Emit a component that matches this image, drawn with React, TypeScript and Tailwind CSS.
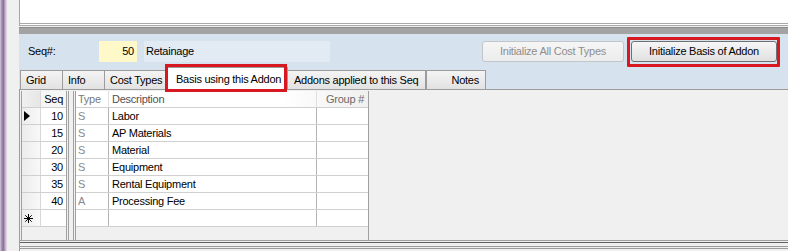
import React from "react";

const rows = [
  { seq: "10", type: "S", desc: "Labor" },
  { seq: "15", type: "S", desc: "AP Materials" },
  { seq: "20", type: "S", desc: "Material" },
  { seq: "30", type: "S", desc: "Equipment" },
  { seq: "35", type: "S", desc: "Rental Equipment" },
  { seq: "40", type: "A", desc: "Processing Fee" },
];

const tabs = [
  { label: "Grid", w: "w-[42px]", align: "justify-start pl-[5px]" },
  { label: "Info", w: "w-[42px]", align: "justify-start pl-[5px]" },
  { label: "Cost Types", w: "w-[63px]", align: "justify-start pl-[5px]" },
];

export default function App() {
  return (
    <div
      className="flex w-[788px] h-[251px] overflow-hidden bg-[#f0f0f0] text-[11px] tracking-[-0.25px] text-black"
      style={{ fontFamily: '"Liberation Sans", Arial, sans-serif' }}
    >
      {/* window edge */}
      <div className="w-[7px] h-full bg-[linear-gradient(to_right,#d6cade,#a48cb0,#8c7498,#c4b4cc,#e6deea)]" />

      <div className="flex flex-col flex-1 ml-[12px]">
        {/* upper white pane */}
        <div className="h-[26px] bg-white border-l border-[#a8a8a8] border-b-[3px] border-b-[#a8a8a8] border-double" />
        <div className="h-[1px]" />
        {/* splitter */}
        <div className="h-[7px] bg-[#a3a3a3] border-t border-[#8c8c8c]" />

        {/* header panel */}
        <div className="flex flex-col h-[55px] bg-[#d6e3ee]">
          <div className="flex items-center h-[33px] pt-[1px]">
            <div className="w-[80px] pl-[9px]">Seq#:</div>
            <div className="w-[38px] h-[21px] bg-[#fff8c8] flex items-center justify-end pr-[3px]">50</div>
            <div className="w-[186px] h-[21px] ml-[7px] bg-[#e2ebf3] flex items-center pl-[2px]">Retainage</div>
            <div className="flex-1" />
            <button className="w-[142px] h-[21px] rounded-[3px] border border-[#c2c6ca] bg-[linear-gradient(#f6f6f6,#ececec)] text-[#8e8e8e]">
              Initialize All Cost Types
            </button>
            <div className="relative ml-[7px] mr-[11px]">
              <button className="w-[146px] h-[21px] rounded-[3px] border border-[#707070] bg-[linear-gradient(#f6f6f6,#e0e0e0)]">
                Initialize Basis of Addon
              </button>
              <div className="absolute -left-[4px] -right-[3px] -top-[4px] -bottom-[5px] border-[3px] border-[#d81820] rounded-[1px]" />
            </div>
          </div>
          {/* tab strip */}
          <div className="flex items-end h-[22px] pl-[1px]">
            {tabs.map((t) => (
              <div
                key={t.label}
                className={`${t.w} ${t.align} flex items-center h-[19px] border border-b-0 border-r-0 border-[#9c9c9c] bg-[linear-gradient(#f4f4f4,#e2e2e2)]`}
              >
                {t.label}
              </div>
            ))}
            <div className="relative w-[121px] h-[23px] flex items-center pl-[8px] bg-white border border-b-0 border-[#9c9c9c] -mb-[1px]">
              Basis using this Addon
              <div className="absolute -left-[3px] right-0 -top-[4px] -bottom-[2px] border-[3px] border-[#d81820]" />
            </div>
            <div className="w-[138px] h-[19px] flex items-center pl-[6px] border border-b-0 border-l-0 border-[#9c9c9c] bg-[linear-gradient(#f4f4f4,#e2e2e2)]">
              Addons applied to this Seq
            </div>
            <div className="w-[60px] h-[19px] flex items-center justify-end pr-[6px] border border-b-0 border-[#9c9c9c] bg-[linear-gradient(#f4f4f4,#e2e2e2)]">
              Notes
            </div>
          </div>
        </div>

        {/* tab page */}
        <div className="flex flex-col flex-1 border-t border-l border-[#9c9c9c] bg-[#f0f0f0]">
          <div className="flex h-[151px] pl-[1px] pt-[1px] border-b border-[#a0a0a0]">
            {/* frozen pane */}
            <div className="flex flex-col w-[48px] border-l border-r-[3px] border-double border-[#a0a0a0]">
              <div className="flex h-[17px] border-b border-[#d0d0d0]">
                <div className="w-[18px] bg-[linear-gradient(to_right,#f0f0f0,#e6e6e6)]" />
                <div className="flex-1 flex items-center justify-end pr-[3px] bg-[#f6f6f6] border-l border-[#d8d8d8]">Seq</div>
              </div>
              {rows.map((r, i) => (
                <div key={r.seq} className="flex h-[17px] border-b border-[#d0d0d0] bg-white">
                  <div className="w-[18px] flex items-center pl-[2px] bg-[linear-gradient(to_right,#ececec,#f8f8f8)]">
                    {i === 0 && (
                      <svg width="6" height="10" viewBox="0 0 6 10">
                        <path d="M0 0 L6 5 L0 10 Z" fill="#000" />
                      </svg>
                    )}
                  </div>
                  <div className="flex-1 flex items-center justify-end pr-[3px] border-l border-[#d8d8d8]">{r.seq}</div>
                </div>
              ))}
              <div className="flex h-[17px] border-b border-[#d0d0d0] bg-white">
                <div className="w-[18px] flex items-center pl-[2px] bg-[linear-gradient(to_right,#ececec,#f8f8f8)]">
                  <svg width="9" height="9" viewBox="0 0 9 9" stroke="#000" strokeWidth="1">
                    <path d="M4.5 0 V9 M0 4.5 H9 M1.3 1.3 L7.7 7.7 M7.7 1.3 L1.3 7.7" />
                  </svg>
                </div>
                <div className="flex-1 border-l border-[#d8d8d8]" />
              </div>
            </div>
            <div className="w-[4px]" />
            {/* scrolling pane */}
            <div className="flex flex-col w-[296px] border-l-[3px] border-r border-double border-[#a0a0a0]">
              <div className="flex h-[17px] border-b border-[#d0d0d0] bg-[linear-gradient(to_right,#ffffff,#ffffff_70%,#f0f0f0)]">
                <div className="w-[33px] flex items-center pl-[2px] text-[#7a7a7a] border-r border-[#e0e0e0]">Type</div>
                <div className="w-[208px] flex items-center pl-[3px] text-[#505050] border-r border-[#e0e0e0]">Description</div>
                <div className="flex-1 flex items-center justify-end pr-[4px] text-[#6a6a6a]">Group #</div>
              </div>
              {rows.map((r) => (
                <div key={r.seq} className="flex h-[17px] border-b border-[#d0d0d0] bg-white">
                  <div className="w-[33px] flex items-center pl-[2px] text-[#8a8a8a] border-r border-[#b4b4b4]">{r.type}</div>
                  <div className="w-[208px] flex items-center pl-[3px] border-r border-[#b4b4b4]">{r.desc}</div>
                  <div className="flex-1" />
                </div>
              ))}
              <div className="flex h-[17px] border-b border-[#d0d0d0] bg-white">
                <div className="w-[33px] border-r border-[#b4b4b4]" />
                <div className="w-[208px] border-r border-[#b4b4b4]" />
                <div className="flex-1" />
              </div>
            </div>
          </div>
          <div className="h-[1px]" />
          <div className="h-[7px] border-t border-[#606060] border-b-[3px] border-double border-b-[#9c9c9c]" />
        </div>
      </div>
    </div>
  );
}
